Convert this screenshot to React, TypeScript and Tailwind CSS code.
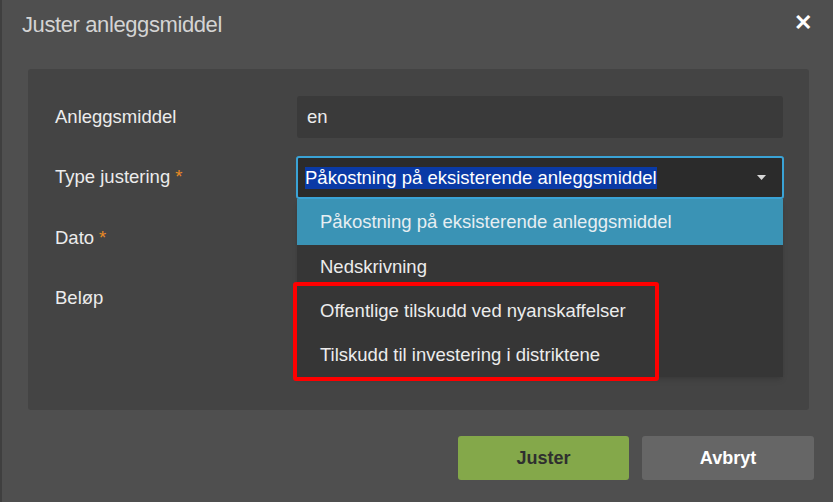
import React from "react";

const options = [
  "Påkostning på eksisterende anleggsmiddel",
  "Nedskrivning",
  "Offentlige tilskudd ved nyanskaffelser",
  "Tilskudd til investering i distriktene",
];

function Label({ text, required }: { text: string; required?: boolean }) {
  return (
    <div className="h-[42px] flex items-center text-[18.5px] text-[#ececec]">
      {text}
      {required && <span className="ml-[5px] text-[#e98a24]">*</span>}
    </div>
  );
}

export default function App() {
  return (
    <div
      className="w-[833px] h-[502px] bg-[#4f4f4f] border-l-2 border-[#3f3f3f] flex flex-col overflow-hidden"
      style={{ fontFamily: '"Liberation Sans", Arial, sans-serif' }}
    >
      {/* Header */}
      <div className="h-[69px] flex items-start justify-between pl-[20px] pr-[21px] pt-[8px]">
        <h1 className="text-[22px] text-[#d4d4d4] tracking-[-0.4px]">
          Juster anleggsmiddel
        </h1>
        <button className="text-white text-[22px] font-bold leading-none mt-[4px]">
          ✕
        </button>
      </div>

      {/* Body panel */}
      <div className="relative ml-[26px] w-[781px] h-[341px] bg-[#444444] rounded-[3px] pt-[27px]">
        <div className="grid grid-cols-[269px_486px] gap-y-[18px]">
          <div className="pl-[27px]">
            <Label text="Anleggsmiddel" />
          </div>
          <div className="h-[42px] bg-[#3a3a3a] rounded-[3px] flex items-center px-[10px] text-[18.5px] text-[#ececec]">
            en
          </div>

          <div className="pl-[27px]">
            <Label text="Type justering" required />
          </div>
          <div className="relative">
            <div className="h-[43px] -ml-px w-[488px] bg-[#2b2b2b] border-2 border-[#3aa3d6] rounded-[3px] flex items-center justify-between pl-[7px] pr-[16px]">
              <span className="bg-[#0a3aa6] text-white text-[18.5px] leading-[22px]">
                Påkostning på eksisterende anleggsmiddel
              </span>
              <svg width="9" height="5" viewBox="0 0 9 5">
                <path d="M0 0h9L4.5 5z" fill="#d8d8d8" />
              </svg>
            </div>

            {/* Open dropdown */}
            <div className="absolute left-0 top-[43px] w-[486px] bg-[#363636] shadow-md z-10">
              {options.map((o, i) => (
                <div
                  key={o}
                  className={
                    i === 0
                      ? "h-[46px] flex items-center pl-[23px] text-[18.5px] bg-[#3a93b5] text-[#e6eef2]"
                      : "h-[44px] flex items-center pl-[23px] text-[18.5px] text-[#ececec]"
                  }
                >
                  {o}
                </div>
              ))}
            </div>
          </div>

          <div className="pl-[27px]">
            <Label text="Dato" required />
          </div>
          <div className="h-[42px]" />

          <div className="pl-[27px]">
            <Label text="Beløp" />
          </div>
          <div className="h-[42px]" />
        </div>

        {/* Annotation box */}
        <div className="absolute left-[265px] top-[213px] w-[366px] h-[99px] border-4 border-[#ff0000] rounded-[3px] z-20" />
      </div>

      {/* Footer */}
      <div className="flex justify-end gap-[13px] pr-[19px] pt-[26px]">
        <button className="w-[171px] h-[44px] bg-[#84a84a] rounded-[3px] text-[#2f2f2f] text-[18px] font-bold">
          Juster
        </button>
        <button className="w-[172px] h-[44px] bg-[#666666] rounded-[3px] text-white text-[18px] font-bold">
          Avbryt
        </button>
      </div>
    </div>
  );
}
